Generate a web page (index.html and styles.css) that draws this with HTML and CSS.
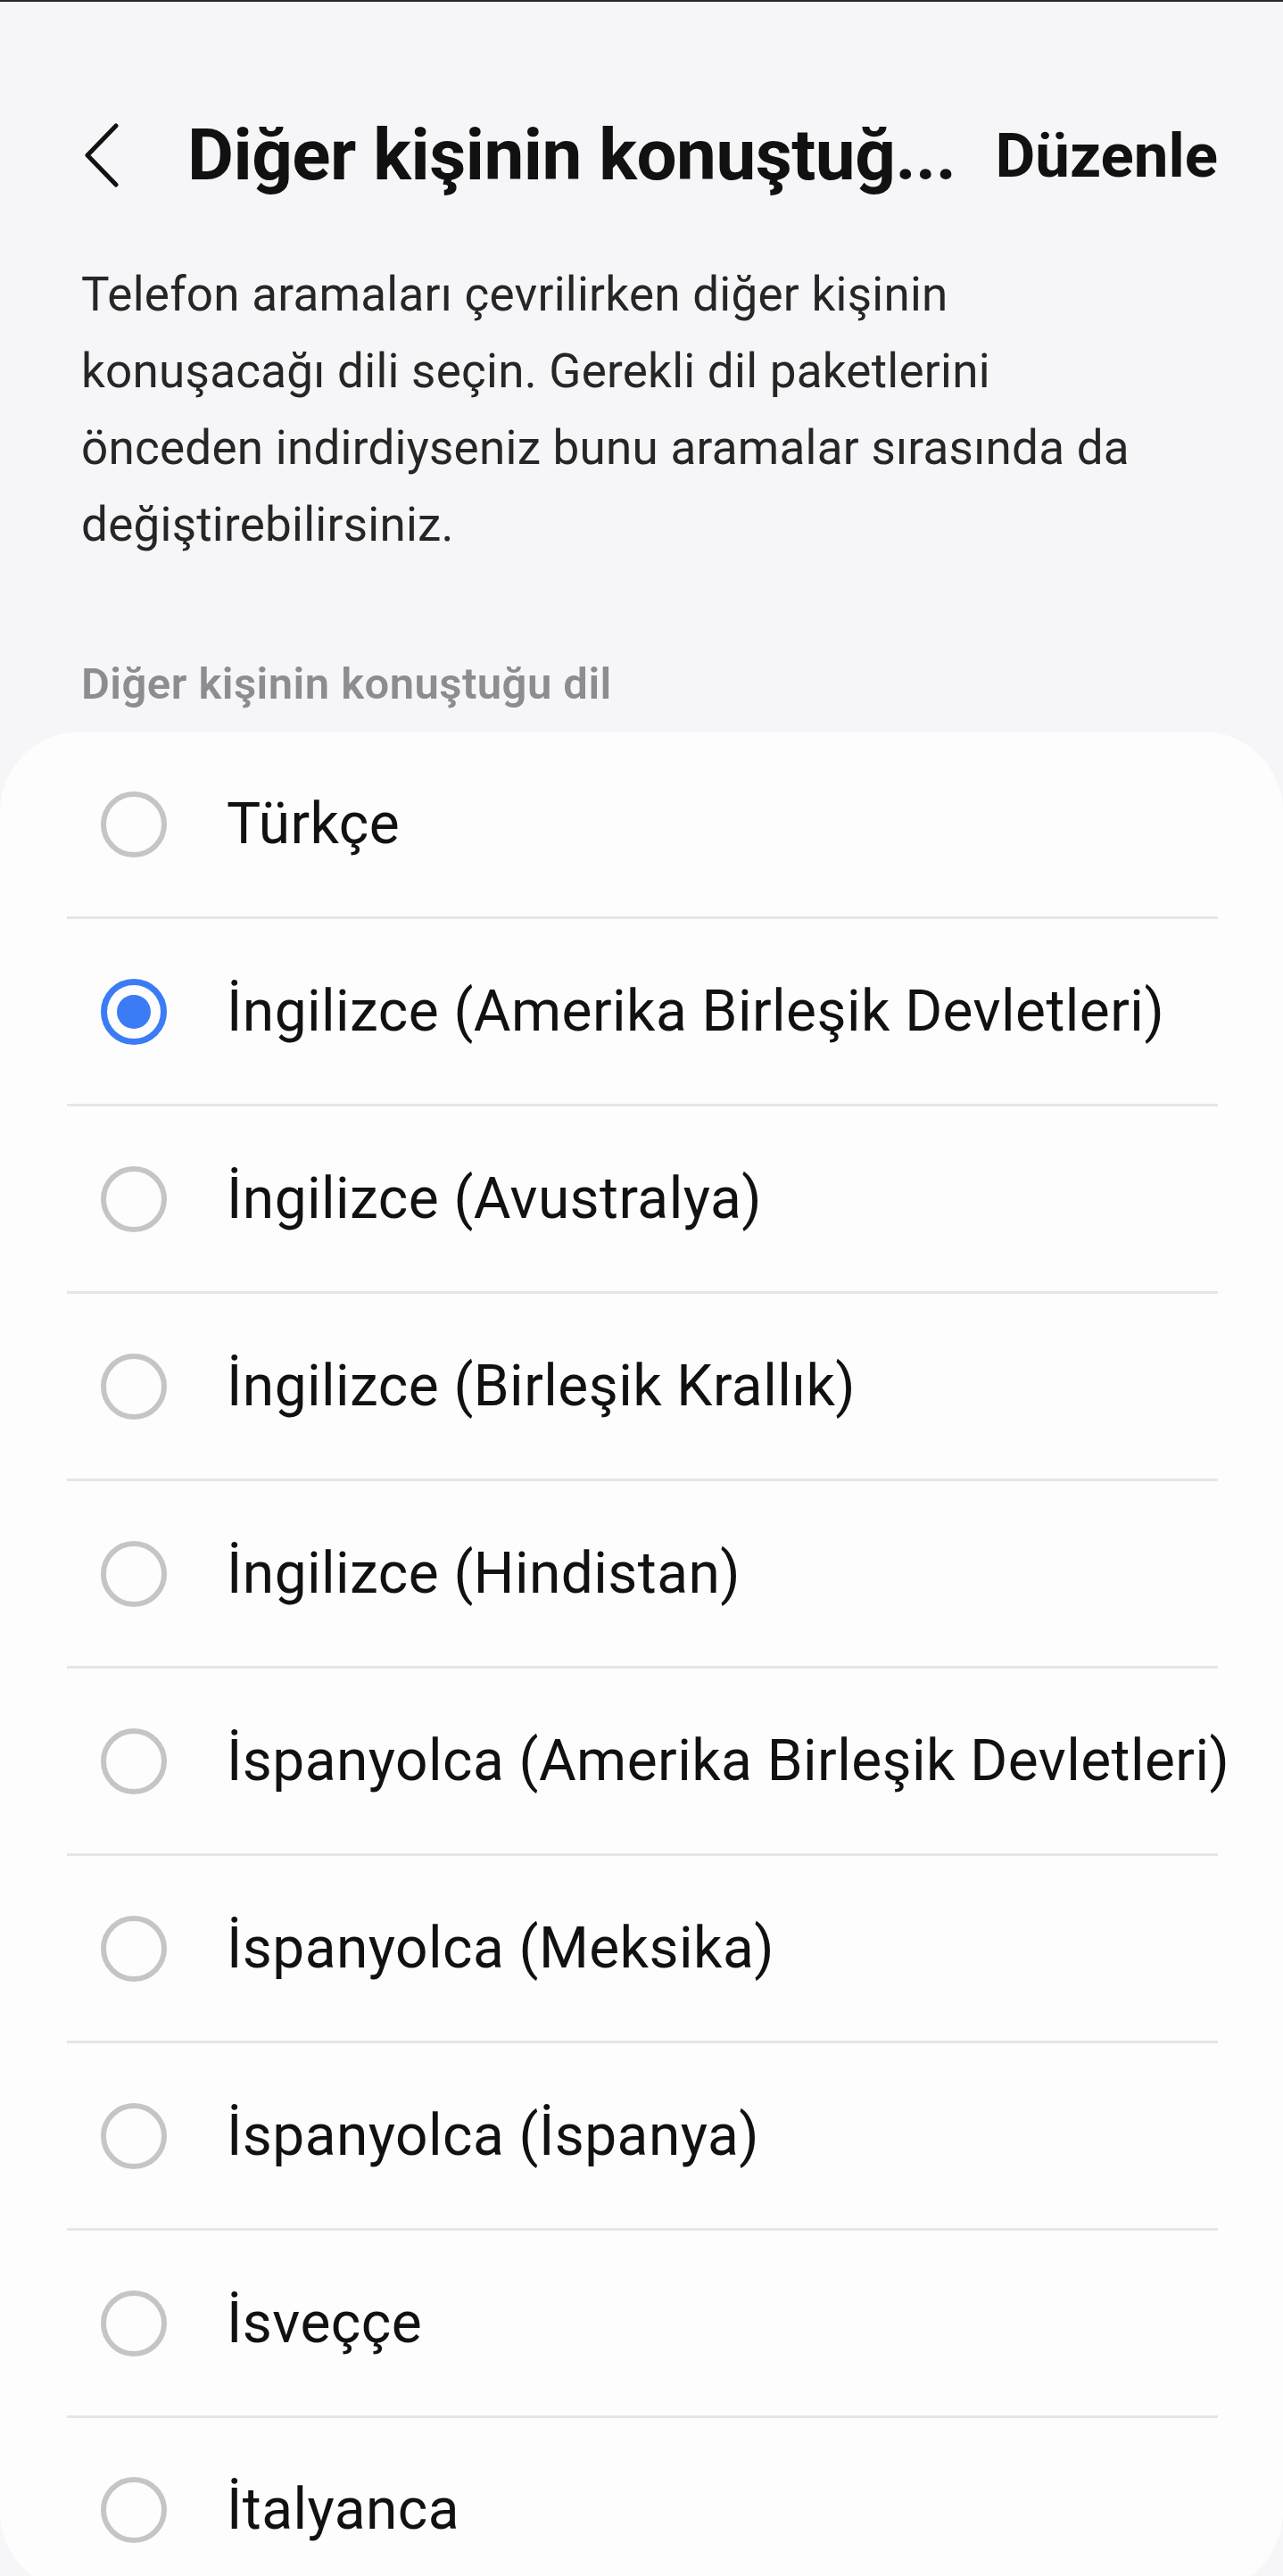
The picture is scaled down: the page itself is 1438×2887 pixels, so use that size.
FILE: index.html
```html
<!DOCTYPE html>
<html lang="tr">
<head>
<meta charset="utf-8">
<title>Diğer kişinin konuştuğu dil</title>
<link rel="stylesheet" href="styles.css">
</head>
<body>
<div class="topline"></div>
<header class="header">
  <button class="back" aria-label="Geri">
    <svg width="40" height="72" viewBox="0 0 40 72"><path d="M36 3 L4 36 L36 69" fill="none" stroke="#111" stroke-width="5" stroke-linecap="round" stroke-linejoin="round"/></svg>
  </button>
  <h1 class="title">Diğer kişinin konuştuğ...</h1>
  <span class="action">Düzenle</span>
</header>
<p class="desc">Telefon aramaları çevrilirken diğer kişinin<br>konuşacağı dili seçin. Gerekli dil paketlerini<br>önceden indirdiyseniz bunu aramalar sırasında da<br>değiştirebilirsiniz.</p>
<div class="label">Diğer kişinin konuştuğu dil</div>
<ul class="card">
  <li class="row"><span class="radio"></span><span class="name">Türkçe</span></li>
  <li class="row"><span class="radio on"></span><span class="name">İngilizce (Amerika Birleşik Devletleri)</span></li>
  <li class="row"><span class="radio"></span><span class="name">İngilizce (Avustralya)</span></li>
  <li class="row"><span class="radio"></span><span class="name">İngilizce (Birleşik Krallık)</span></li>
  <li class="row"><span class="radio"></span><span class="name">İngilizce (Hindistan)</span></li>
  <li class="row"><span class="radio"></span><span class="name">İspanyolca (Amerika Birleşik Devletleri)</span></li>
  <li class="row"><span class="radio"></span><span class="name">İspanyolca (Meksika)</span></li>
  <li class="row"><span class="radio"></span><span class="name">İspanyolca (İspanya)</span></li>
  <li class="row"><span class="radio"></span><span class="name">İsveççe</span></li>
  <li class="row"><span class="radio"></span><span class="name">İtalyanca</span></li>
</ul>
</body>
</html>
```
FILE: styles.css
```css
* { box-sizing: border-box; }
html, body {
  margin: 0;
  padding: 0;
  height: 2887px;
  overflow: hidden;
}
body {
  background: #f6f6f8;
  font-family: Roboto, "Noto Sans", "Liberation Sans", sans-serif;
  color: #111;
  display: flex;
  flex-direction: column;
}
.topline {
  height: 2px;
  background: #2a2a2a;
  flex: none;
}
.header {
  flex: none;
  height: 120px;
  margin-top: 112px;
  display: flex;
  align-items: center;
  padding: 0 73px 0 94px;
}
.back {
  border: 0;
  background: none;
  padding: 0;
  margin: 0;
  width: 40px;
  height: 72px;
  display: flex;
}
.title {
  flex: 1;
  margin: 0 0 0 76px;
  font-size: 80px;
  line-height: 1;
  font-weight: 700;
  letter-spacing: -0.5px;
  white-space: nowrap;
  color: #111;
}
.action {
  font-size: 69px;
  line-height: 1;
  font-weight: 700;
  color: #111;
}
.desc {
  flex: none;
  margin: 53px 0 0 0;
  padding: 0 91px;
  font-size: 53px;
  line-height: 86px;
  letter-spacing: 0.25px;
  color: #262626;
}
.label {
  flex: none;
  margin-top: 106px;
  padding: 0 91px;
  font-size: 49px;
  line-height: 60px;
  font-weight: 600;
  letter-spacing: 0.45px;
  color: #8c8c91;
}
.card {
  flex: none;
  list-style: none;
  margin: 23px 0 0 0;
  padding: 0 73px 0 75px;
  background: #fdfdfe;
  border-radius: 90px;
}
.row {
  height: 210px;
  display: flex;
  align-items: center;
  padding-left: 38px;
  border-bottom: 3px solid #e6e6e8;
}
.row:last-child {
  border-bottom: none;
  height: 195px;
  padding-top: 10px;
}
.radio {
  flex: none;
  width: 74px;
  height: 74px;
  border-radius: 50%;
  border: 6px solid #c5c5c7;
  display: flex;
  align-items: center;
  justify-content: center;
}
.radio.on {
  border: 7px solid #3b7cf5;
}
.radio.on::after {
  content: "";
  width: 38px;
  height: 38px;
  border-radius: 50%;
  background: #3b7cf5;
}
.name {
  margin-left: 67px;
  font-size: 64px;
  letter-spacing: 0.45px;
  white-space: nowrap;
  color: #111;
}
```
